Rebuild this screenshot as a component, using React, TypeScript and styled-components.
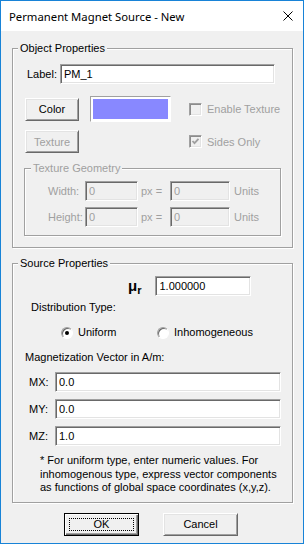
import React from 'react'
import styled, { createGlobalStyle } from 'styled-components'

const GlobalStyle = createGlobalStyle`
  html, body { margin: 0; padding: 0; background: #fff; }
  body {
    font-family: "Liberation Sans", Arial, sans-serif;
    font-size: 11px;
    color: #000;
  }
  * { box-sizing: border-box; }
`

const App = () => {
  return (
    <>
      <GlobalStyle />
      <Window>
        <TitleBar>
          <span>Permanent Magnet Source - New</span>
          <CloseIcon width="10" height="10" viewBox="0 0 10 10">
            <path d="M0.5 0.5 L9.5 9.5 M9.5 0.5 L0.5 9.5" stroke="#000" strokeWidth="1" fill="none" />
          </CloseIcon>
        </TitleBar>
        <Body>
          <Group>
            <Caption>Object Properties</Caption>
            <ObjectContent>
              <LabelRow>
                <LabelText>Label:</LabelText>
                <Field $w={215} defaultValue="PM_1" />
              </LabelRow>
              <PropGrid>
                <Button>Color</Button>
                <Swatch>
                  <SwatchFill $c="#8888ff" />
                </Swatch>
                <Check>
                  <CheckBox />
                  Enable Texture
                </Check>
                <Button disabled>Texture</Button>
                <Check style={{ gridColumn: 3 }}>
                  <CheckBox>
                    <svg width="9" height="9" viewBox="0 0 9 9">
                      <polyline points="1.5,4 3.5,6.2 7.5,1.8" stroke="#a0a0a0" strokeWidth="1.8" fill="none" />
                    </svg>
                  </CheckBox>
                  Sides Only
                </Check>
              </PropGrid>
              <SubGroup>
                <Caption $disabled $offset={6}>Texture Geometry</Caption>
                <GeoGrid>
                  <Dim>Width:</Dim>
                  <Field $w={53} disabled defaultValue="0" />
                  <Dim $pad={3}>px =</Dim>
                  <Field $w={60} disabled defaultValue="0" />
                  <Dim $pad={4}>Units</Dim>
                  <Dim>Height:</Dim>
                  <Field $w={53} disabled defaultValue="0" />
                  <Dim $pad={3}>px =</Dim>
                  <Field $w={60} disabled defaultValue="0" />
                  <Dim $pad={4}>Units</Dim>
                </GeoGrid>
              </SubGroup>
            </ObjectContent>
          </Group>

          <Group $mt={9}>
            <Caption>Source Properties</Caption>
            <SourceContent>
              <MuRow>
                <Mu>
                  μ<MuSub>r</MuSub>
                </Mu>
                <Field $w={96} defaultValue="1.000000" />
              </MuRow>
              <Text $left={18} $mt={5}>Distribution Type:</Text>
              <RadioRow>
                <RadioOption>
                  <Radio $on />
                  Uniform
                </RadioOption>
                <RadioOption>
                  <Radio />
                  Inhomogeneous
                </RadioOption>
              </RadioRow>
              <Text $left={12} $mt={12}>Magnetization Vector in A/m:</Text>
              <VectorList>
                {[
                  ['MX:', '0.0'],
                  ['MY:', '0.0'],
                  ['MZ:', '1.0'],
                ].map(([k, v]) => (
                  <VectorRow key={k}>
                    <VectorLabel>{k}</VectorLabel>
                    <Field $w={226} defaultValue={v} />
                  </VectorRow>
                ))}
              </VectorList>
              <Note>
                * For uniform type, enter numeric values. For
                <br />
                inhomogenous type, express vector components
                <br />
                as functions of global space coordinates (x,y,z).
              </Note>
            </SourceContent>
          </Group>

          <Footer>
            <Button $default $w={75}>
              <Focus>OK</Focus>
            </Button>
            <Button $w={75}>Cancel</Button>
          </Footer>
        </Body>
      </Window>
    </>
  )
}

export default App

const Window = styled.div`
  width: 304px;
  height: 544px;
  border: 1px solid #1883d7;
  display: flex;
  flex-direction: column;
  background: #f0f0f0;
`
const TitleBar = styled.div`
  height: 30px;
  flex: none;
  background: #fff;
  display: flex;
  align-items: center;
  justify-content: space-between;
  padding: 0 10px 0 8px;
  font-family: "Segoe UI", "Noto Sans", sans-serif;
  font-size: 11.3px;
`
const CloseIcon = styled.svg`
  display: block;
`
const Body = styled.div`
  display: flex;
  flex-direction: column;
  padding: 11px 10px 0 11px;
`
const Group = styled.fieldset<{ $mt?: number }>`
  margin: ${({ $mt }) => $mt || 0}px 0 0 0;
  padding: 0;
  min-width: 0;
  border: 1px solid #a0a0a0;
  box-shadow: inset 1px 1px 0 #fff, 1px 1px 0 #fff;
`
const SubGroup = styled(Group)`
  margin: 9px 11px 0 11px;
`
const Caption = styled.legend<{ $disabled?: boolean; $offset?: number }>`
  margin-left: ${({ $offset }) => $offset ?? 5}px;
  padding: 0 2px;
  line-height: 13px;
  background: #f0f0f0;
  color: ${({ $disabled }) => ($disabled ? '#a0a0a0' : '#000')};
`
const ObjectContent = styled.div`
  padding: 9px 0 11px 0;
`
const LabelRow = styled.div`
  display: flex;
  align-items: center;
  padding-left: 14px;
`
const LabelText = styled.span`
  width: 33px;
`
const Field = styled.input<{ $w: number }>`
  width: ${({ $w }) => $w}px;
  height: 20px;
  padding: 0 3px;
  margin: 0;
  font: inherit;
  color: #000;
  background: #fff;
  border: 1px solid;
  border-color: #a0a0a0 #fff #fff #a0a0a0;
  box-shadow: inset 1px 1px 0 #696969, inset -1px -1px 0 #e3e3e3;
  outline: none;

  &:disabled {
    background: #f0f0f0;
    color: #a0a0a0;
  }
`
const PropGrid = styled.div`
  display: grid;
  grid-template-columns: 54px 81px 1fr;
  grid-template-rows: 26px 23px;
  column-gap: 11px;
  row-gap: 8px;
  align-items: center;
  margin-top: 12px;
  padding-left: 12px;
`
const Button = styled.button<{ $default?: boolean; $w?: number }>`
  width: ${({ $w }) => ($w ? `${$w}px` : '100%')};
  height: 23px;
  margin: 0;
  padding: 0;
  font: inherit;
  color: #000;
  background: #f0f0f0;
  display: flex;
  align-items: center;
  justify-content: center;
  border: 1px solid;
  border-color: ${({ $default }) => ($default ? '#000' : '#fff #696969 #696969 #fff')};
  box-shadow: ${({ $default }) =>
    $default
      ? 'inset 1px 1px 0 #fff, inset -1px -1px 0 #696969, inset -2px -2px 0 #a0a0a0'
      : 'inset 1px 1px 0 #e3e3e3, inset -1px -1px 0 #a0a0a0'};

  &:disabled {
    color: #a0a0a0;
  }
`
const Focus = styled.span`
  display: flex;
  align-items: center;
  justify-content: center;
  width: calc(100% - 8px);
  height: calc(100% - 8px);
  border: 1px dotted #000;
`
const Swatch = styled.div`
  width: 81px;
  height: 26px;
  padding: 2px;
  background: #fff;
  border: 1px solid;
  border-color: #a0a0a0 #fff #fff #a0a0a0;
`
const SwatchFill = styled.div<{ $c: string }>`
  width: 100%;
  height: 100%;
  background: ${({ $c }) => $c};
`
const Check = styled.label`
  display: flex;
  align-items: center;
  gap: 5px;
  margin-left: 7px;
  color: #a0a0a0;
`
const CheckBox = styled.span`
  width: 13px;
  height: 13px;
  flex: none;
  display: flex;
  align-items: center;
  justify-content: center;
  background: #f0f0f0;
  border: 1px solid;
  border-color: #a0a0a0 #fff #fff #a0a0a0;
  box-shadow: inset 1px 1px 0 #8c8c8c, inset -1px -1px 0 #e3e3e3;
`
const GeoGrid = styled.div`
  display: grid;
  grid-template-columns: 37px 53px 32px 60px auto;
  grid-auto-rows: 20px;
  row-gap: 6px;
  align-items: center;
  padding: 6px 0 8px 23px;
`
const Dim = styled.span<{ $pad?: number }>`
  color: #a0a0a0;
  padding-left: ${({ $pad }) => $pad || 0}px;
`
const SourceContent = styled.div`
  display: flex;
  flex-direction: column;
  padding: 6px 0 7px 0;
`
const MuRow = styled.div`
  display: flex;
  align-items: center;
  padding-left: 115px;
  gap: 14px;
`
const Mu = styled.span`
  font-size: 15px;
  font-weight: bold;
  line-height: 15px;
`
const MuSub = styled.span`
  font-size: 11px;
  position: relative;
  top: 3px;
`
const Text = styled.div<{ $left: number; $mt: number }>`
  line-height: 13px;
  padding-left: ${({ $left }) => $left}px;
  margin-top: ${({ $mt }) => $mt}px;
`
const RadioRow = styled.div`
  display: grid;
  grid-template-columns: 96px auto;
  padding-left: 48px;
  margin-top: 12px;
  line-height: 13px;
`
const RadioOption = styled.label`
  display: flex;
  align-items: center;
  gap: 5px;
`
const Radio = styled.span<{ $on?: boolean }>`
  width: 12px;
  height: 12px;
  flex: none;
  border-radius: 50%;
  display: flex;
  align-items: center;
  justify-content: center;
  background: #fff;
  border: 1px solid;
  border-color: #a0a0a0 #fff #fff #a0a0a0;
  box-shadow: inset 1px 1px 0 #696969;

  &::after {
    content: '';
    width: 4px;
    height: 4px;
    border-radius: 50%;
    background: ${({ $on }) => ($on ? '#000' : 'transparent')};
  }
`
const VectorList = styled.div`
  display: flex;
  flex-direction: column;
  gap: 7px;
  margin-top: 8px;
`
const VectorRow = styled.div`
  display: flex;
  align-items: center;
  padding-left: 16px;
`
const VectorLabel = styled.span`
  width: 26px;
`
const Note = styled.div`
  margin-top: 8px;
  padding-left: 27px;
  line-height: 13.5px;
`
const Footer = styled.div`
  display: flex;
  gap: 24px;
  margin-top: 10px;
  padding-left: 52px;
`
